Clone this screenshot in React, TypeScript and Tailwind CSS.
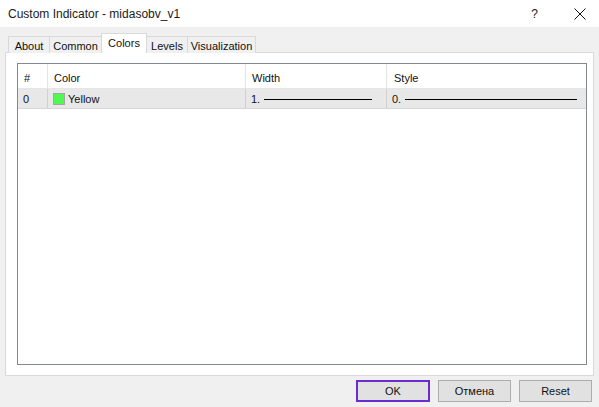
const tabs = [
  { label: 'About', width: 'w-[42px]' },
  { label: 'Common', width: 'w-[53px]' },
  { label: 'Colors', width: 'w-[46px]', active: true },
  { label: 'Levels', width: 'w-[42px]' },
  { label: 'Visualization', width: 'w-[69px]' },
];

function StyleLine({ prefix, lineWidth }: { prefix: string; lineWidth: string }) {
  return (
    <div className="flex items-center h-full pl-[5px]">
      <span>{prefix}</span>
      <span className={`ml-[4px] h-px bg-black ${lineWidth}`} />
    </div>
  );
}

export default function App() {
  return (
    <div
      className="w-[599px] h-[407px] bg-[#f0f0f0] flex flex-col text-[#111] overflow-hidden"
      style={{ fontFamily: '"Liberation Sans", Arial, sans-serif' }}
    >
      {/* title bar */}
      <div className="h-[27px] bg-white flex items-center pl-[8px] shrink-0">
        <span className="text-[12px] text-[#1a1a1a]">Custom Indicator - midasobv_v1</span>
        <span className="ml-auto text-[12px] text-[#222] mr-[36px]">?</span>
        <svg width="12" height="12" viewBox="0 0 12 12" className="mr-[13px]">
          <path d="M0.5 0.5 L11.5 11.5 M11.5 0.5 L0.5 11.5" stroke="#111" strokeWidth="1" />
        </svg>
      </div>

      <div className="flex flex-col pl-[5px] pr-[5px] pt-[7px]">
        {/* tabs */}
        <div className="flex items-end h-[19px] pl-[3px] relative z-10 -mb-px">
          {tabs.map((t) =>
            t.active ? (
              <div
                key={t.label}
                className={`${t.width} h-[20px] -ml-px bg-white border border-b-0 border-[#d9d9d9] flex items-center justify-center text-[11px]`}
              >
                {t.label}
              </div>
            ) : (
              <div
                key={t.label}
                className={`${t.width} h-[17px] -ml-px first:ml-0 bg-[#f0f0f0] border border-b-0 border-[#d9d9d9] flex items-center justify-center text-[11px] pt-[2px]`}
              >
                {t.label}
              </div>
            )
          )}
        </div>

        {/* panel */}
        <div className="h-[324px] border border-[#d9d9d9] bg-white pt-[10px] pl-[11px]">
          <div className="w-[570px] h-[302px] border border-[#828790] bg-white text-[11px]">
            <div className="grid grid-cols-[30px_198px_141px_1fr] h-[25px] border-b border-[#e5e5e5]">
              <div className="border-r border-[#e5e5e5] flex items-center pl-[6px] pt-[4px]">#</div>
              <div className="border-r border-[#e5e5e5] flex items-center pl-[6px] pt-[4px]">Color</div>
              <div className="border-r border-[#e5e5e5] flex items-center pl-[6px] pt-[4px]">Width</div>
              <div className="flex items-center pl-[7px] pt-[4px]">Style</div>
            </div>
            <div className="grid grid-cols-[30px_198px_141px_1fr] h-[20px] bg-[#e8e8e8] border-b border-[#d6d6d6]">
              <div className="border-r border-[#d0d0d0] flex items-center pl-[5px] pt-[2px]">0</div>
              <div className="border-r border-[#d0d0d0] flex items-center pl-[5px]">
                <span className="w-[12px] h-[12px] bg-[#50f850] border border-[#a6a6a6] mr-[3px]" />
                <span className="pt-[2px]">Yellow</span>
              </div>
              <div className="border-r border-[#d0d0d0] pt-[2px]">
                <StyleLine prefix="1." lineWidth="w-[108px]" />
              </div>
              <div className="pt-[2px]">
                <StyleLine prefix="0." lineWidth="w-[172px]" />
              </div>
            </div>
          </div>
        </div>
      </div>

      {/* buttons */}
      <div className="flex justify-end gap-[8px] pr-[7px] pt-[4px]">
        <button className="w-[74px] h-[22px] bg-[#e1e1e1] border-2 border-[#6a2bd1] text-[11px] pt-px">OK</button>
        <button className="w-[73px] h-[22px] bg-[#e1e1e1] border border-[#adadad] text-[11px] pt-px">Отмена</button>
        <button className="w-[73px] h-[22px] bg-[#e1e1e1] border border-[#adadad] text-[11px] pt-px">Reset</button>
      </div>
    </div>
  );
}
